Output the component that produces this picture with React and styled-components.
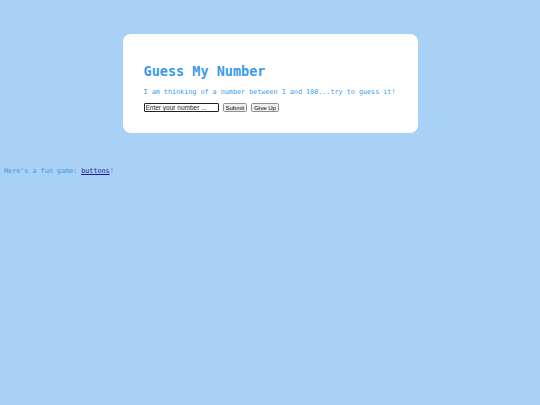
import React from "react";
import styled, { createGlobalStyle } from "styled-components";

const Global = createGlobalStyle`
  html, body { background: #a9d0f5; }
  body {
    margin: 4px;
    font-family: "DejaVu Sans Mono", monospace;
    color: #3a9be8;
  }
`;

const Card = styled.div`
  width: 253px;
  margin: 30px auto 0;
  padding: 29px 21px 21px;
  background: #ffffff;
  border-radius: 8px;
`;

const Title = styled.h1`
  margin: 0 0 9px;
  font-size: 13.5px;
  font-weight: bold;
  color: #3a9be8;
`;

const Lead = styled.p`
  margin: 0 0 7px;
  font-size: 6.75px;
  color: #3a9be8;
`;

const Row = styled.div`
  display: flex;
  align-items: center;
  gap: 4px;
`;

const Input = styled.input`
  width: 75px;
  height: 9px;
  box-sizing: border-box;
  padding: 0 1px;
  font-family: "Liberation Sans", Arial, sans-serif;
  font-size: 6.5px;
  color: #000;
  border: 1px solid #222;
  border-radius: 1px;
  &::placeholder { color: #222; }
`;

const Button = styled.button`
  height: 9px;
  padding: 0 2px;
  font-family: "Liberation Sans", Arial, sans-serif;
  font-size: 6px;
  line-height: 1;
  color: #000;
  background: #efefef;
  border: 1px solid #8f8f8f;
  border-radius: 1.5px;
`;

const Footer = styled.p`
  margin: 34px 0 0;
  font-size: 6.75px;
  color: #3a9be8;
`;

const Link = styled.a`
  color: #1a1a9a;
`;

export default function App() {
  return (
    <>
      <Global />
      <Card>
        <Title>Guess My Number</Title>
        <Lead>I am thinking of a number between 1 and 100...try to guess it!</Lead>
        <Row>
          <Input placeholder="Enter your number ..." />
          <Button>Submit</Button>
          <Button>Give Up</Button>
        </Row>
      </Card>
      <Footer>
        Here's a fun game: <Link href="#">buttons</Link>!
      </Footer>
    </>
  );
}
